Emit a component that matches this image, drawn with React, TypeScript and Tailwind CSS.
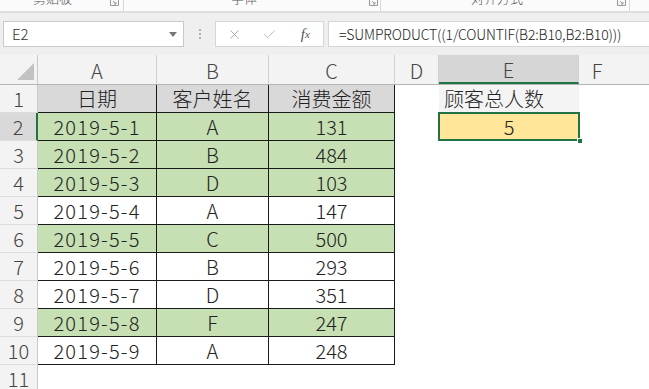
import React from "react";
import { X, Check } from "lucide-react";

const rows: { d: string; n: string; v: string; g: boolean }[] = [
  { d: "2019-5-1", n: "A", v: "131", g: true },
  { d: "2019-5-2", n: "B", v: "484", g: true },
  { d: "2019-5-3", n: "D", v: "103", g: true },
  { d: "2019-5-4", n: "A", v: "147", g: false },
  { d: "2019-5-5", n: "C", v: "500", g: true },
  { d: "2019-5-6", n: "B", v: "293", g: false },
  { d: "2019-5-7", n: "D", v: "351", g: false },
  { d: "2019-5-8", n: "F", v: "247", g: true },
  { d: "2019-5-9", n: "A", v: "248", g: false },
];

function Launcher() {
  return (
    <svg width="9" height="7" viewBox="0 0 9 7" className="block">
      <path d="M0.5 0 V6.5 H8.5 V0" fill="none" stroke="#9a9a9a" strokeWidth="1" />
      <path d="M3 2 L6 5 M6 3 V5 H4" fill="none" stroke="#9a9a9a" strokeWidth="1" />
    </svg>
  );
}

function RowHeader({ n, sel }: { n: number; sel?: boolean }) {
  return (
    <div
      className={`w-[38px] h-full flex items-center justify-center border-b border-b-[#dcdcdc] ${
        sel ? "bg-[#d9d9d9] border-r-2 border-r-[#217346]" : "bg-[#f3f3f3] border-r border-r-[#c9c9c9]"
      } text-[#444] text-[20px]`}
    >
      {n}
    </div>
  );
}

export default function App() {
  const cell = "h-full flex items-center justify-center border-r border-b border-[#1a1a1a]";
  return (
    <div className="w-[649px] h-[389px] overflow-hidden bg-white font-['Noto_Sans_CJK_SC',sans-serif] font-light text-[#222]">
      {/* ribbon strip remnant */}
      <div className="h-[11px] bg-[#fbfbfb] overflow-hidden flex items-start text-[#555] text-[13px] leading-[16px]">
        <div className="w-[124px] h-full relative border-r border-[#d8d8d8] flex">
          <span className="absolute left-[33px] top-[-10px]">剪贴板</span>
          <span className="absolute left-[110px] top-[-1px]"><Launcher /></span>
        </div>
        <div className="w-[257px] h-full relative border-r border-[#d8d8d8]">
          <span className="absolute left-[107px] top-[-10px]">字体</span>
          <span className="absolute left-[245px] top-[-1px]"><Launcher /></span>
        </div>
        <div className="w-[249px] h-full relative border-r border-[#d8d8d8]">
          <span className="absolute left-[90px] top-[-10px]">对齐方式</span>
          <span className="absolute left-[236px] top-[-1px]"><Launcher /></span>
        </div>
      </div>
      <div className="h-[2px] bg-[#dedede]" />
      {/* formula bar */}
      <div className="h-[42px] bg-[#efefef] flex items-start pt-[8px] pl-[3px]">
        <div className="w-[181px] h-[26px] bg-white border border-[#c9c9c9] flex items-center pl-[8px] pr-[6px] text-[15px] text-[#333]">
          <span className="flex-1">E2</span>
          <svg width="8" height="5" viewBox="0 0 8 5"><path d="M0 0 H8 L4 5 Z" fill="#777" /></svg>
        </div>
        <div className="w-[31px] h-[26px] flex flex-col items-center justify-center gap-[2px]">
          <span className="w-[2px] h-[2px] bg-[#b0b0b0]" />
          <span className="w-[2px] h-[2px] bg-[#b0b0b0]" />
          <span className="w-[2px] h-[2px] bg-[#b0b0b0]" />
        </div>
        <div className="w-[109px] h-[26px] bg-white border border-[#d6d6d6] flex items-center">
          <span className="w-[36px] flex justify-center ml-[1px]"><X size={15} strokeWidth={1.5} color="#a8a8a8" /></span>
          <span className="w-[36px] flex justify-center"><Check size={15} strokeWidth={1.5} color="#b4b4b4" /></span>
          <span className="w-[36px] flex justify-center font-['Liberation_Serif',serif] italic text-[15px] text-[#555]">
            f<span className="text-[11px] mt-[3px]">x</span>
          </span>
        </div>
        <div className="flex-1 h-[26px] ml-[4px] bg-white border border-[#d6d6d6] border-r-0 flex items-center pl-[10px] text-[14px] text-[#222] tracking-[-0.15px]">
          =SUMPRODUCT((1/COUNTIF(B2:B10,B2:B10)))
        </div>
      </div>
      {/* column headers */}
      <div className="h-[30px] flex bg-[#f3f3f3] border-b border-[#b5b5b5] text-[20px] text-[#444]">
        <div className="w-[38px] h-full border-r border-[#c9c9c9] relative">
          <svg width="38" height="29" viewBox="0 0 38 29" className="block">
            <path d="M34 8 V25 H17 Z" fill="#c2c2c2" />
          </svg>
        </div>
        <div className="w-[119px] flex items-center justify-center border-r border-[#d0d0d0] pt-[2px]">A</div>
        <div className="w-[112px] flex items-center justify-center border-r border-[#d0d0d0] pt-[2px]">B</div>
        <div className="w-[126px] flex items-center justify-center border-r border-[#d0d0d0] pt-[2px]">C</div>
        <div className="w-[44px] flex items-center justify-center border-r border-[#d0d0d0] pt-[2px]">D</div>
        <div className="w-[140px] flex items-center justify-center border-r border-[#d0d0d0] bg-[#d6d6d6] border-b-2 border-b-[#217346] pt-[2px]">E</div>
        <div className="flex-1 flex items-center justify-center pt-[2px] pr-[34px]">F</div>
      </div>
      {/* row 1 */}
      <div className="h-[28px] flex text-[20px]">
        <RowHeader n={1} />
        <div className={`w-[119px] ${cell} bg-[#d9d9d9]`}>日期</div>
        <div className={`w-[112px] ${cell} bg-[#d9d9d9]`}>客户姓名</div>
        <div className={`w-[126px] ${cell} bg-[#d9d9d9]`}>消费金额</div>
        <div className="w-[44px] h-full" />
        <div className="w-[140px] h-full flex items-center pl-[5px] bg-[#f4f4f4]">顾客总人数</div>
        <div className="flex-1" />
      </div>
      {rows.map((r, i) => (
        <div key={i} className="h-[28px] flex text-[20px]">
          <RowHeader n={i + 2} sel={i === 0} />
          <div className={`w-[119px] ${cell} tracking-[1.2px] ${r.g ? "bg-[#c6e0b4]" : "bg-white"}`}>{r.d}</div>
          <div className={`w-[112px] ${cell} ${r.g ? "bg-[#c6e0b4]" : "bg-white"}`}>{r.n}</div>
          <div className={`w-[126px] ${cell} ${r.g ? "bg-[#c6e0b4]" : "bg-white"}`}>{r.v}</div>
          <div className="w-[44px] h-full" />
          {i === 0 ? (
            <div className="w-[140px] h-full relative bg-[#ffe699] flex items-center justify-center">
              5
              <div className="absolute left-[-1px] top-[-1px] right-[-1px] bottom-[0px] border-2 border-[#217346]" />
              <div className="absolute right-[-4px] bottom-[-3px] w-[6px] h-[6px] bg-[#217346] border border-white" />
            </div>
          ) : (
            <div className="w-[140px] h-full" />
          )}
          <div className="flex-1" />
        </div>
      ))}
      <div className="h-[28px] flex text-[20px]">
        <RowHeader n={11} />
      </div>
    </div>
  );
}
